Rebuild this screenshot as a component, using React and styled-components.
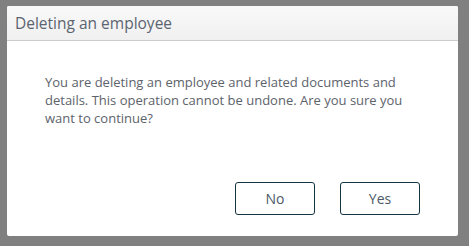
import React from "react";
import styled, { createGlobalStyle } from "styled-components";

const GlobalStyle = createGlobalStyle`
  html, body {
    margin: 0;
    padding: 0;
    background: #808080;
    height: 246px;
    overflow: hidden;
  }
`;

const Overlay = styled.div`
  padding: 6px 0 0 7px;
`;

const Dialog = styled.div`
  display: flex;
  flex-direction: column;
  width: 451px;
  height: 230px;
  background: #ffffff;
  border-radius: 2px;
  overflow: hidden;
  font-family: "Open Sans", "Liberation Sans", sans-serif;
`;

const Header = styled.div`
  display: flex;
  align-items: center;
  height: 34px;
  padding: 0 8px;
  background: linear-gradient(#f9f9f9, #f0f0f0);
  border-bottom: 1px solid #cccccc;
  color: #5b6470;
  font-size: 15.5px;
`;

const Body = styled.div`
  padding: 32px 38px 0 38px;
  color: #5d636b;
  font-size: 13px;
  line-height: 18px;
`;

const Footer = styled.div`
  display: flex;
  justify-content: flex-end;
  gap: 25px;
  margin-top: auto;
  padding: 0 38px 21px 0;
`;

const Button = styled.button`
  width: 80px;
  height: 33px;
  background: #ffffff;
  border: 1px solid #12333f;
  border-radius: 3px;
  color: #4b5a66;
  font-family: "Open Sans", "Liberation Sans", sans-serif;
  font-size: 14px;
  cursor: pointer;
`;

const App = () => {
  return (
    <Overlay>
      <GlobalStyle />
      <Dialog>
        <Header>Deleting an employee</Header>
        <Body>
          You are deleting an employee and related documents and details. This
          operation cannot be undone. Are you sure you want to continue?
        </Body>
        <Footer>
          <Button>No</Button>
          <Button>Yes</Button>
        </Footer>
      </Dialog>
    </Overlay>
  );
};

export default App;
